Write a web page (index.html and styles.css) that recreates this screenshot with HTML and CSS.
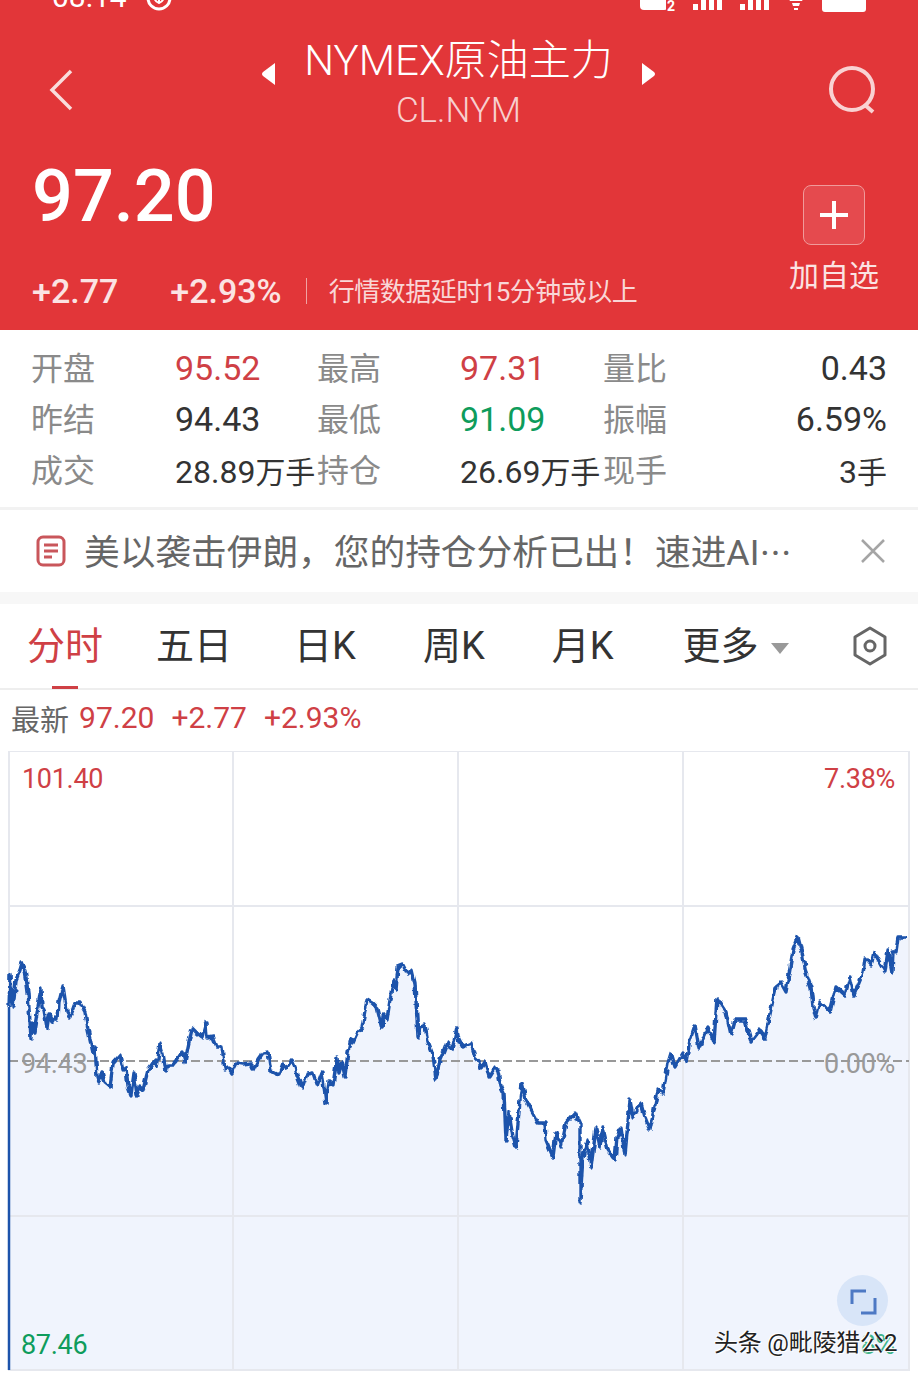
FILE: index.html
```html
<!DOCTYPE html>
<html lang="zh-CN">
<head>
    <meta charset="UTF-8">
    <meta name="viewport" content="width=device-width, initial-scale=1.0">
    <title>NYMEX原油主力</title>
    <link rel="stylesheet" href="styles.css">
</head>
<body>
    <div class="header">
        <div class="status-bar">
            <div class="status-left">
                <span class="clock">08:14</span>
                <svg class="status-leaf" width="28" height="28" viewBox="0 0 28 28"><circle cx="14" cy="14" r="11" fill="none" stroke="#fff" stroke-width="3"/><path d="M14 8v12M9 11c0 5 2 7 5 8M19 11c0 5-2 7-5 8" fill="none" stroke="#fff" stroke-width="2"/></svg>
            </div>
            <div class="status-right">
                <svg width="36" height="24" viewBox="0 0 36 24"><rect x="0" y="0" width="28" height="22" rx="4" fill="#fff"/><path d="M26 10h10v14H26z" fill="#e23639"/><text x="27" y="23" class="sim-num">2</text></svg>
                <svg width="30" height="24" viewBox="0 0 30 24"><path d="M0 16h5v6H0zM8 12h5v10H8zM16 6h5v16h-5zM24 0h5v22h-5z" fill="#fff"/></svg>
                <svg width="30" height="24" viewBox="0 0 30 24"><path d="M0 16h5v6H0zM8 12h5v10H8zM16 6h5v16h-5zM24 0h5v22h-5z" fill="#fff"/></svg>
                <svg width="18" height="24" viewBox="0 0 18 24"><path d="M0 8h18l-3 5H3zM5 15h8l-1 3H6zM7 20h4v2H7z" fill="#fff"/></svg>
                <div class="battery"></div>
            </div>
        </div>

        <div class="title-row">
            <svg class="back-icon" width="24" height="42" viewBox="0 0 24 42"><path d="M22 2 3 21l19 19" fill="none" stroke="#f9dcdc" stroke-width="3.5"/></svg>
            <div class="title-center">
                <svg width="16" height="24" viewBox="0 0 16 24"><path d="M14 1v22L2 14q-2-2 0-4z" fill="#fff"/></svg>
                <div class="title-text">
                    <div class="title-main">NYMEX原油主力</div>
                    <div class="title-code">CL.NYM</div>
                </div>
                <svg width="16" height="24" viewBox="0 0 16 24"><path d="M2 1v22l12-9q2-2 0-4z" fill="#fff"/></svg>
            </div>
            <svg class="search-icon" width="50" height="50" viewBox="0 0 50 50"><circle cx="24" cy="24" r="21" fill="none" stroke="#f9d2d2" stroke-width="4"/><path d="m37 40 8 7" stroke="#f9d2d2" stroke-width="4" fill="none"/></svg>
        </div>

        <div class="price-row">
            <div class="price-left">
                <div class="price">97.20</div>
                <div class="change-row">
                    <span class="change">+2.77</span>
                    <span class="change change-pct">+2.93%</span>
                    <span class="divider"></span>
                    <span class="delay">行情数据延时15分钟或以上</span>
                </div>
            </div>
            <div class="watch">
                <div class="watch-btn"><svg width="30" height="30" viewBox="0 0 30 30"><path d="M15 1v28M1 15h28" stroke="#fff" stroke-width="4"/></svg></div>
                <div class="watch-label">加自选</div>
            </div>
        </div>
    </div>

    <div class="stats">
        <span class="stat-label">开盘</span><span class="stat-val up">95.52</span>
        <span class="stat-label">最高</span><span class="stat-val up">97.31</span>
        <span class="stat-label">量比</span><span class="stat-val end">0.43</span>
        <span class="stat-label">昨结</span><span class="stat-val">94.43</span>
        <span class="stat-label">最低</span><span class="stat-val down">91.09</span>
        <span class="stat-label">振幅</span><span class="stat-val end">6.59%</span>
        <span class="stat-label">成交</span><span class="stat-val small">28.89<span class="unit">万手</span></span>
        <span class="stat-label">持仓</span><span class="stat-val small">26.69<span class="unit">万手</span></span>
        <span class="stat-label">现手</span><span class="stat-val small end">3<span class="unit">手</span></span>
    </div>

    <div class="notice">
        <svg width="30" height="32" viewBox="0 0 30 32"><rect x="2" y="2" width="26" height="28" rx="5" fill="none" stroke="#c9565b" stroke-width="3"/><path d="M8 10h14M8 16h14M8 22h8" stroke="#c9565b" stroke-width="3"/></svg>
        <div class="notice-text">美以袭击伊朗，您的持仓分析已出！速进AI<span class="notice-dots">…</span></div>
        <svg class="notice-close" width="26" height="26" viewBox="0 0 26 26"><path d="m2 2 22 22M24 2 2 24" stroke="#a5a5a5" stroke-width="2.5"/></svg>
    </div>

    <div class="tabs">
        <div class="tab tab-active">分时</div>
        <div class="tab tab-five">五日</div>
        <div class="tab">日K</div>
        <div class="tab">周K</div>
        <div class="tab">月K</div>
        <div class="tab tab-more">更多<span class="tab-caret"></span></div>
        <svg class="tab-gear" width="38" height="40" viewBox="0 0 38 40"><path d="M19 2 34 11V29L19 38 4 29V11Z" fill="none" stroke="#666" stroke-width="3" stroke-linejoin="round"/><circle cx="19" cy="20" r="5" fill="none" stroke="#666" stroke-width="3"/></svg>
    </div>

    <div class="latest">
        <span class="latest-label">最新</span>
        <span class="latest-val">97.20</span>
        <span class="latest-val">+2.77</span>
        <span class="latest-val">+2.93%</span>
    </div>

    <div class="chart">
        <svg class="chart-svg" width="918" height="626" viewBox="0 751 918 626">
            <defs>
                <filter id="jitter" filterUnits="userSpaceOnUse" x="0" y="751" width="918" height="626">
                    <feTurbulence type="fractalNoise" baseFrequency="0.18" numOctaves="1" seed="4"/>
                    <feDisplacementMap in="SourceGraphic" scale="6" xChannelSelector="R" yChannelSelector="G"/>
                </filter>
            </defs>
            <path class="area" d="M9 1007 10 975 13 1007 16 980 20 970 22 963 25 970 28 992 31 1038 32 1023 34 1032 41 988 42 1007 44 1010 47 1028 49 1015 52 1022 55 1017 58 1020 59 1002 63 986 67 1012 70 1017 75 1003 80 1003 85 1012 88 1030 93 1053 95 1047 97 1077 99 1082 102 1072 105 1083 110 1087 113 1063 120 1055 123 1070 126 1067 128 1087 131 1095 134 1073 137 1095 140 1087 143 1090 148 1070 155 1060 157 1067 160 1043 163 1053 166 1072 168 1065 173 1065 177 1060 182 1052 185 1062 188 1047 192 1028 197 1033 202 1037 206 1022 207 1038 213 1037 217 1047 222 1047 225 1070 228 1067 232 1073 237 1063 243 1064 250 1063 253 1070 258 1060 263 1053 268 1052 271 1072 275 1073 279 1075 283 1064 287 1067 292 1060 295 1067 297 1075 302 1088 307 1074 313 1073 317 1085 322 1072 326 1103 329 1082 333 1085 337 1057 339 1073 342 1062 345 1077 348 1052 351 1038 353 1043 358 1032 362 1028 367 1000 372 1003 377 1008 382 1028 383 1015 387 1020 393 980 396 990 398 967 403 965 408 975 412 970 415 983 418 1037 421 1027 425 1025 428 1042 433 1055 436 1079 440 1060 443 1053 447 1042 452 1050 457 1028 458 1037 463 1047 466 1045 471 1043 475 1057 478 1060 481 1068 485 1062 489 1077 495 1067 498 1072 501 1087 504 1093 506 1140 509 1112 513 1137 516 1147 520 1100 522 1083 526 1100 531 1110 538 1123 545 1123 546 1140 553 1157 556 1133 561 1147 566 1123 575 1113 580 1123 580 1202 583 1157 587 1140 591 1168 596 1128 600 1147 603 1128 608 1150 615 1160 617 1137 621 1128 625 1155 630 1100 633 1117 641 1103 645 1117 650 1130 658 1090 663 1093 668 1063 671 1053 675 1067 683 1053 686 1062 690 1040 695 1025 699 1048 708 1027 714 1043 717 998 726 1012 731 1035 735 1020 745 1020 751 1042 760 1030 765 1038 773 1000 776 987 781 983 786 992 793 950 798 937 803 957 806 973 811 987 813 1007 816 1018 820 1002 830 1012 836 987 845 995 850 977 854 995 863 973 865 958 871 965 874 952 885 972 888 950 892 972 893 952 896 952 898 937 908 937 908 1370H9Z"/>
            <g class="grid">
                <rect x="9" y="751" width="900" height="619"/>
                <path d="M233 751V1370M458 751V1370M683 751V1370M9 906H909M9 1216H909"/>
            </g>
            <path class="base" d="M9 1061H909"/>
            <path class="axis-line" d="M9 1370V1007"/>
            <path class="line" filter="url(#jitter)" d="M9 1007 10 975 13 1007 16 980 20 970 22 963 25 970 28 992 31 1038 32 1023 34 1032 41 988 42 1007 44 1010 47 1028 49 1015 52 1022 55 1017 58 1020 59 1002 63 986 67 1012 70 1017 75 1003 80 1003 85 1012 88 1030 93 1053 95 1047 97 1077 99 1082 102 1072 105 1083 110 1087 113 1063 120 1055 123 1070 126 1067 128 1087 131 1095 134 1073 137 1095 140 1087 143 1090 148 1070 155 1060 157 1067 160 1043 163 1053 166 1072 168 1065 173 1065 177 1060 182 1052 185 1062 188 1047 192 1028 197 1033 202 1037 206 1022 207 1038 213 1037 217 1047 222 1047 225 1070 228 1067 232 1073 237 1063 243 1064 250 1063 253 1070 258 1060 263 1053 268 1052 271 1072 275 1073 279 1075 283 1064 287 1067 292 1060 295 1067 297 1075 302 1088 307 1074 313 1073 317 1085 322 1072 326 1103 329 1082 333 1085 337 1057 339 1073 342 1062 345 1077 348 1052 351 1038 353 1043 358 1032 362 1028 367 1000 372 1003 377 1008 382 1028 383 1015 387 1020 393 980 396 990 398 967 403 965 408 975 412 970 415 983 418 1037 421 1027 425 1025 428 1042 433 1055 436 1079 440 1060 443 1053 447 1042 452 1050 457 1028 458 1037 463 1047 466 1045 471 1043 475 1057 478 1060 481 1068 485 1062 489 1077 495 1067 498 1072 501 1087 504 1093 506 1140 509 1112 513 1137 516 1147 520 1100 522 1083 526 1100 531 1110 538 1123 545 1123 546 1140 553 1157 556 1133 561 1147 566 1123 575 1113 580 1123 580 1202 583 1157 587 1140 591 1168 596 1128 600 1147 603 1128 608 1150 615 1160 617 1137 621 1128 625 1155 630 1100 633 1117 641 1103 645 1117 650 1130 658 1090 663 1093 668 1063 671 1053 675 1067 683 1053 686 1062 690 1040 695 1025 699 1048 708 1027 714 1043 717 998 726 1012 731 1035 735 1020 745 1020 751 1042 760 1030 765 1038 773 1000 776 987 781 983 786 992 793 950 798 937 803 957 806 973 811 987 813 1007 816 1018 820 1002 830 1012 836 987 845 995 850 977 854 995 863 973 865 958 871 965 874 952 885 972 888 950 892 972 893 952 896 952 898 937 908 937"/>
        </svg>

        <span class="axis axis-top-left up">101.40</span>
        <span class="axis axis-top-right up">7.38%</span>
        <span class="axis axis-mid-left">94.43</span>
        <span class="axis axis-mid-right">0.00%</span>
        <span class="axis axis-bottom-left down">87.46</span>
        <span class="axis axis-bottom-right">8%</span>

        <div class="expand">
            <svg width="28" height="28" viewBox="0 0 28 28"><path d="M17 4H3V17M12 26H26V11" fill="none" stroke="#4d79c4" stroke-width="3"/></svg>
        </div>
        <div class="watermark">头条 @毗陵猎公2</div>
    </div>
</body>
</html>
```

FILE: styles.css
```css
* {
    box-sizing: border-box;
}
html, body {
    margin: 0;
    padding: 0;
}
body {
    width: 918px;
    height: 1377px;
    overflow: hidden;
    background-color: #fff;
    font-family: "Roboto", "Noto Sans CJK SC", sans-serif;
}
.header {
    height: 330px;
    background-color: #e23639;
    color: #fff;
}
.status-bar {
    height: 12px;
    padding: 0 52px;
    display: flex;
    justify-content: space-between;
    align-items: flex-end;
}
.status-left, .status-right {
    display: flex;
    align-items: flex-end;
}
.status-left {
    gap: 18px;
}
.status-right {
    gap: 17px;
}
.clock {
    font-size: 30px;
    line-height: 30px;
}
.sim-num {
    font-size: 14px;
    font-weight: 700;
    fill: #fff;
}
.battery {
    width: 44px;
    height: 24px;
    background-color: #fff;
    border-radius: 3px;
}
.title-row {
    height: 146px;
    padding: 10px 40px 0 49px;
    display: flex;
    justify-content: space-between;
    align-items: center;
}
.title-center {
    display: flex;
    align-items: flex-start;
    gap: 27px;
    margin-left: 16px;
    margin-bottom: 12px;
}
.title-center svg {
    margin-top: 28px;
}
.title-text {
    text-align: center;
}
.title-main {
    font-size: 42px;
    line-height: 54px;
    font-weight: 300;
    white-space: nowrap;
}
.title-code {
    font-size: 35px;
    line-height: 46px;
    font-weight: 300;
    color: #f7cfcf;
}
.price-row {
    display: flex;
    justify-content: space-between;
    padding: 0 39px 0 32px;
}
.price {
    margin-top: 2px;
    font-size: 72px;
    line-height: 74px;
    font-weight: 500;
}
.change-row {
    display: flex;
    align-items: center;
    margin-top: 37px;
    height: 40px;
}
.change {
    font-size: 34px;
    font-weight: 500;
    color: #fbe3e3;
}
.change-pct {
    margin-left: 52px;
}
.divider {
    width: 1px;
    height: 26px;
    margin: 0 22px 0 24px;
    background-color: #f0a3a3;
}
.delay {
    margin-top: -4px;
    font-size: 26px;
    color: #f9d6d6;
    letter-spacing: -0.5px;
}
.watch {
    margin-top: 27px;
    display: flex;
    flex-direction: column;
    align-items: center;
}
.watch-btn {
    width: 62px;
    height: 60px;
    border: 1px solid #f09a9a;
    border-radius: 8px;
    background-color: #e54a4e;
    display: flex;
    align-items: center;
    justify-content: center;
}
.watch-label {
    margin-top: 9px;
    font-size: 30px;
    line-height: 44px;
    color: #fbe3e3;
}
.stats {
    height: 180px;
    padding: 12px 31px 0;
    display: grid;
    grid-template-columns: 144px 142px 143px 143px 100px 1fr;
    grid-auto-rows: 51px;
    align-items: center;
    border-bottom: 3px solid #f2f2f2;
}
.stat-label {
    font-size: 32px;
    color: #8a8a8a;
    white-space: nowrap;
    margin-top: -3px;
}
.stat-val {
    font-size: 34px;
    color: #333;
    white-space: nowrap;
}
.stat-val.small {
    font-size: 32px;
}
.stat-val.end {
    text-align: right;
}
.unit {
    font-size: 30px;
}
.up {
    color: #cf4045;
}
.down {
    color: #0e9c5c;
}
.notice {
    height: 94px;
    padding: 0 32px 0 36px;
    display: flex;
    align-items: center;
    border-bottom: 12px solid #f7f7f7;
}
.notice-text {
    margin-left: 18px;
    margin-top: -4px;
    flex: 1;
    font-size: 35.7px;
    color: #666;
    white-space: nowrap;
}
.notice-dots {
    font-family: "Noto Sans CJK SC", sans-serif;
    font-size: 32px;
}
.tabs {
    height: 86px;
    padding-left: 27px;
    display: flex;
    align-items: center;
    border-bottom: 2px solid #eee;
}
.tab {
    font-size: 38px;
    line-height: 46px;
    color: #333;
    margin-right: 67px;
    white-space: nowrap;
    position: relative;
}
.tab-active {
    color: #cf4045;
    margin-right: 53px;
}
.tab-five {
    margin-right: 62px;
}
.tab-active::after {
    content: "";
    position: absolute;
    left: 25px;
    bottom: -20px;
    width: 26px;
    height: 3px;
    background-color: #cf4045;
}
.tab-more {
    margin-left: 2px;
    margin-right: 0;
    display: flex;
    align-items: center;
}
.tab-caret {
    margin-left: 12px;
    margin-top: 4px;
    border-left: 9px solid transparent;
    border-right: 9px solid transparent;
    border-top: 11px solid #999;
}
.tab-gear {
    margin-left: 62px;
}
.latest {
    height: 61px;
    padding: 0 0 6px 11px;
    display: flex;
    align-items: center;
    gap: 17px;
}
.latest-label {
    font-size: 29px;
    color: #666;
    margin-right: -7px;
}
.latest-val {
    font-size: 30px;
    color: #cf4045;
}
.chart {
    position: relative;
    height: 626px;
}
.chart-svg {
    display: block;
}
.area {
    fill: #f0f4fd;
}
.grid {
    fill: none;
    stroke: #e6e8ee;
    stroke-width: 2;
}
.base {
    fill: none;
    stroke: #999;
    stroke-width: 2;
    stroke-dasharray: 9 4;
}
.axis-line {
    fill: none;
    stroke: #1c53ab;
    stroke-width: 2.5;
}
.line {
    fill: none;
    stroke: #1c53ab;
    stroke-width: 3.4;
    stroke-linejoin: round;
}
.axis {
    position: absolute;
    font-size: 27px;
    line-height: 32px;
    letter-spacing: -0.3px;
}
.axis-top-left {
    left: 22px;
    top: 12px;
}
.axis-top-right {
    right: 23px;
    top: 12px;
}
.axis-mid-left {
    left: 21px;
    top: 297px;
    color: #999;
}
.axis-mid-right {
    right: 23px;
    top: 297px;
    color: #999;
}
.axis-bottom-left {
    left: 21px;
    top: 578px;
}
.axis-bottom-right {
    right: 23px;
    top: 578px;
    color: #3fb58a;
}
.expand {
    position: absolute;
    left: 837px;
    top: 524px;
    width: 51px;
    height: 51px;
    border-radius: 50%;
    background-color: #d8e5f8;
    display: flex;
    align-items: center;
    justify-content: center;
}
.watermark {
    position: absolute;
    left: 714px;
    top: 576px;
    font-size: 24px;
    line-height: 32px;
    letter-spacing: -0.2px;
    color: #222;
    white-space: nowrap;
    text-shadow: 1px 1px 0 #fff, -1px -1px 0 #fff;
}
```
